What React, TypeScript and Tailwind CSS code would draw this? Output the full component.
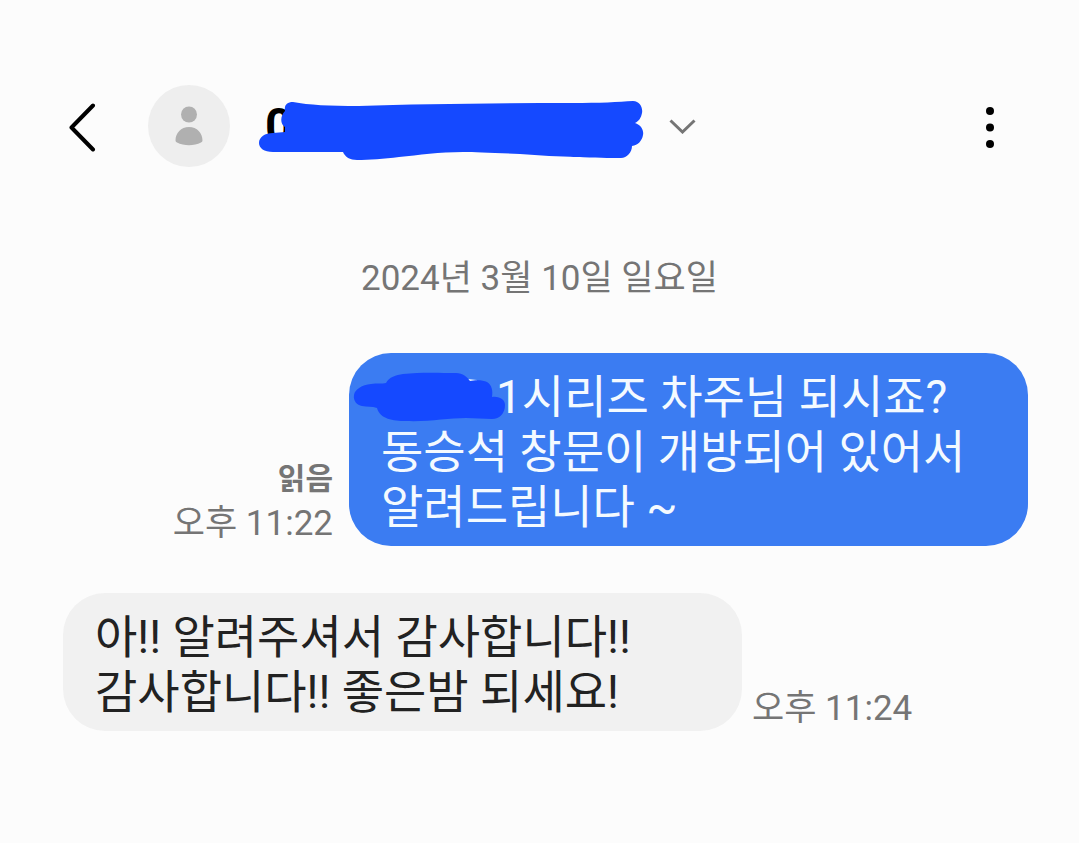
type Message = {
  id: number;
  sent: boolean;
  redacted?: boolean;
  lines: string[];
  time: string;
  status?: string;
};

const messages: Message[] = [
  {
    id: 1,
    sent: true,
    redacted: true,
    lines: ["1시리즈 차주님 되시죠?", "동승석 창문이 개방되어 있어서", "알려드립니다 ~"],
    time: "오후 11:22",
    status: "읽음",
  },
  {
    id: 2,
    sent: false,
    lines: ["아!! 알려주셔서 감사합니다!!", "감사합니다!! 좋은밤 되세요!"],
    time: "오후 11:24",
  },
];

function NameScribble() {
  return (
    <svg width="386" height="62" viewBox="0 0 386 62" fill="#1549ff" aria-hidden="true">
      <path d="M26 10C25 4 28 1 34 1C50 4 70 5 100 5C160 3 240 2 314 2C340 2 360 1 374 0C381 0 384 7 383 12C382 17 380 20 376 22C382 24 385 29 384 34C383 40 379 44 373 45C373 51 368 57 362 57C340 57 300 56 261 53C235 52 215 51 204 51C180 51 160 54 140 56C125 58 110 59 98 59C91 59 86 56 84 51L14 51C5 51 0 47 0 42C0 36 6 32 14 32L26 31V26C21 23 21 15 26 10Z" />
    </svg>
  );
}

function MessageScribble() {
  return (
    <svg
      className="absolute -left-7 top-0.5"
      width="154"
      height="50"
      viewBox="0 0 154 50"
      aria-hidden="true"
    >
      <path d="M115 7L124 8L122 12H117Z" fill="#e8f4ff" />
      <path
        d="M1 23C2 17 9 13 18 12C24 11 29 12 33 11C36 5 43 3 50 2C68 0 88 1 103 1C110 1 114 5 117 9C122 8 130 8 134 10C139 13 140 19 139 25C147 24 152 28 152 33C152 41 147 47 139 47C130 47 122 46 113 46C95 46 75 50 53 49C40 49 27 47 24 36C19 34 14 35 9 34C4 33 0 29 1 23Z"
        fill="#1549ff"
      />
    </svg>
  );
}

function Header() {
  return (
    <header className="flex h-[82px] items-center pl-[67px] pr-[84px]">
      <button type="button" aria-label="뒤로" className="shrink-0">
        <svg width="30" height="52" viewBox="0 0 30 52" fill="none" stroke="#000" strokeWidth="4" strokeLinecap="round" strokeLinejoin="round">
          <path d="M26 5.500L4.500 27.500L26 49.500" />
        </svg>
      </button>
      <div className="ml-[51px] flex size-[82px] shrink-0 items-center justify-center rounded-full bg-[#eeeeee]">
        <svg width="28" height="40" viewBox="0 0 28 40" fill="#b0b0b0" aria-hidden="true">
          <circle cx="14" cy="8.500" r="8" />
          <path d="M0.500 34.500C0.500 27 6 21 14 21C22 21 27.500 27 27.500 34.500Q27.500 35.800 26 36.500C19 40 9 40 2 36.500Q0.500 35.800 0.500 34.500Z" />
        </svg>
      </div>
      <h1 className="relative ml-[29px] flex h-[62px] w-[386px] shrink-0 items-center">
        <span className="pl-1.5 text-[48px] font-bold leading-[48px] text-black">0</span>
        <span className="absolute left-0 top-1.5">
          <NameScribble />
        </span>
      </h1>
      <button type="button" aria-label="대화 상세정보" className="ml-6 shrink-0">
        <svg width="28" height="16" viewBox="0 0 28 16" fill="none" stroke="#757575" strokeWidth="3">
          <path d="M1.500 2.500L13.500 14L25.500 2.500" />
        </svg>
      </button>
      <button type="button" aria-label="옵션 더보기" className="ml-auto shrink-0">
        <svg width="10" height="44" viewBox="0 0 10 44" fill="#000">
          <circle cx="5" cy="7" r="4" />
          <circle cx="5" cy="23.500" r="4" />
          <circle cx="5" cy="40" r="4" />
        </svg>
      </button>
    </header>
  );
}

function MessageRow({ message }: { message: Message }) {
  const { sent, redacted, lines, time, status } = message;

  return (
    <li className={sent ? "flex flex-row-reverse items-end gap-4" : "flex items-end gap-2.5"}>
      <div
        className={
          sent
            ? "w-3/4 max-w-[679px] rounded-[42px] bg-[#3b7cf2] px-8 pb-[11px] pt-[17px] text-[#f4faff]"
            : "w-3/4 max-w-[679px] rounded-[42px] bg-[#f1f1f1] px-8 pb-[11px] pt-[17px] text-[#222222]"
        }
      >
        {lines.map((line, i) => (
          <p key={line} className="whitespace-nowrap text-[46px] leading-[55px]">
            {redacted && i === 0 && (
              <span className="relative inline-block h-[50px] w-[115px] align-top">
                <MessageScribble />
              </span>
            )}
            {line}
          </p>
        ))}
      </div>
      <div className="shrink-0 text-right text-[35px] leading-[45px] text-[#757575]">
        {status && <p className="text-[30px] font-bold">{status}</p>}
        <time>{time}</time>
      </div>
    </li>
  );
}

export default function App() {
  return (
    <main className="min-h-screen bg-[#fcfcfc] pt-[85px] font-['Roboto','Noto_Sans_CJK_KR',sans-serif]">
      <Header />
      <p className="mt-[90px] text-center text-[35px] leading-[44px] text-[#757575]">2024년 3월 10일 일요일</p>
      <ul className="mt-[52px] flex flex-col gap-[47px] pl-[63px] pr-[51px]">
        {messages.map((message) => (
          <MessageRow key={message.id} message={message} />
        ))}
      </ul>
    </main>
  );
}
